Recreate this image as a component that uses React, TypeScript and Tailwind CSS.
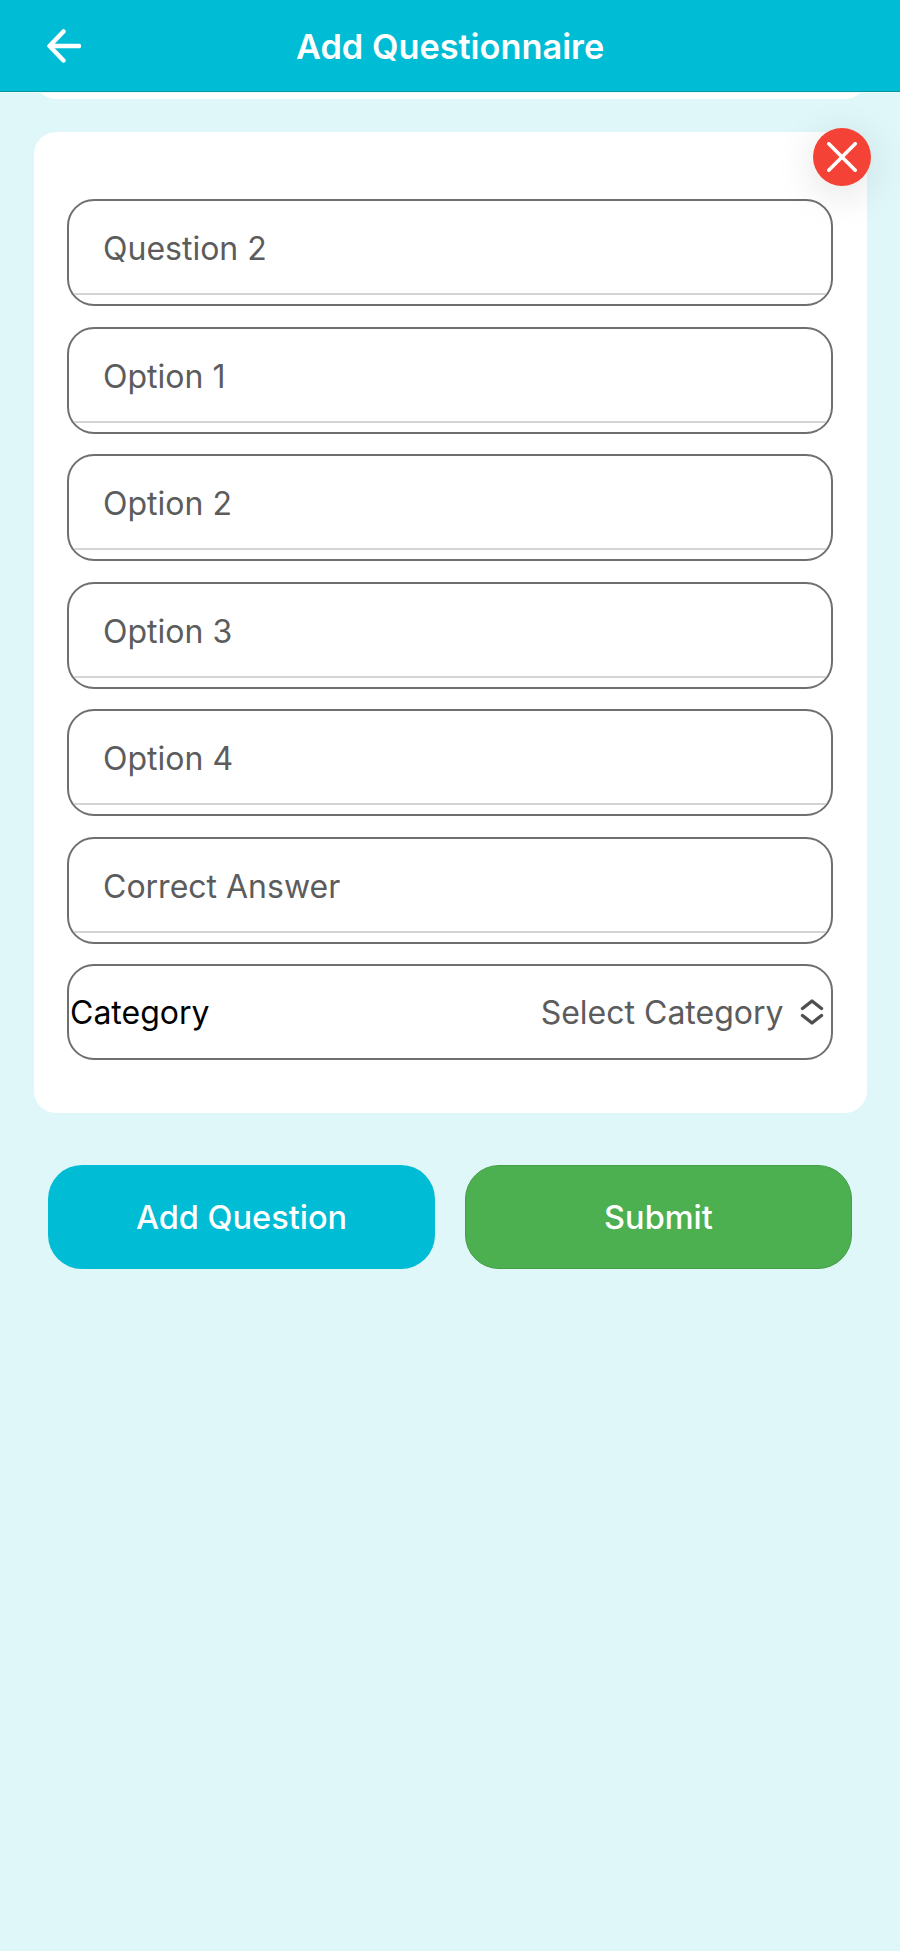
const fields = ["Question 2", "Option 1", "Option 2", "Option 3", "Option 4", "Correct Answer"];

function Field({ label }: { label: string }) {
  return (
    <div className="flex h-[107px] flex-col overflow-hidden rounded-[27px] border-2 border-[#6f6f6f] bg-white">
      <div className="flex h-[94px] shrink-0 items-center border-b-2 border-[#d4d4d4] pl-[34px] pt-[4px] text-[32px] text-[#5c5c5c]">
        {label}
      </div>
    </div>
  );
}

export default function App() {
  return (
    <div className="flex h-[1951px] w-[900px] flex-col bg-[#e0f7fa] font-['Inter',sans-serif]">
      <header className="flex h-[92px] shrink-0 items-center border-b border-[#0097a7] bg-[#00bcd4] pl-[47px]">
        <svg className="mt-[1px]" width="34" height="34" viewBox="0 0 34 34" fill="none" stroke="white" strokeWidth="4.5" strokeLinecap="round" strokeLinejoin="round">
          <path d="M32 17H3M16.500 2.500 2.500 17l14 14.500" />
        </svg>
        <h1 className="ml-[215px] pt-[3px] text-[34.300px] font-semibold text-white">Add Questionnaire</h1>
      </header>
      <div className="h-[7px] shrink-0 overflow-hidden border-t border-[#f0fbfc] pl-[33.500px] pr-[33px]">
        <div className="mt-[-24px] h-[30px] rounded-b-[22px] bg-white" />
      </div>
      <main className="flex flex-col pl-[33.500px] pr-[33px] pt-[33px]">
        <section className="relative flex flex-col gap-[20.500px] rounded-[22px] bg-white pb-[53px] pl-[33.500px] pr-[34.500px] pt-[67px]">
          <button className="absolute right-[-3.500px] top-[-4px] flex h-[58px] w-[58px] items-center justify-center rounded-full bg-[#f44336] shadow-[0_8px_40px_rgba(0,0,0,0.12)]">
            <svg width="30" height="30" viewBox="0 0 30 30" fill="none" stroke="white" strokeWidth="3.600" strokeLinecap="round">
              <path d="M1.800 1.800 28.200 28.200M28.200 1.800 1.800 28.200" />
            </svg>
          </button>
          {fields.map((f) => (
            <Field key={f} label={f} />
          ))}
          <div className="flex h-[96px] items-center rounded-[27px] border-2 border-[#6f6f6f] bg-white pl-[1px] pr-[7px]">
            <span className="pt-[1px] text-[32px] text-black">Category</span>
            <span className="ml-auto pt-[1px] text-[32px] text-[#5c5c5c]">Select Category</span>
            <svg className="ml-[16px]" width="24" height="26" viewBox="0 0 24 26" fill="none" stroke="#505050" strokeWidth="3.400" strokeLinecap="round" strokeLinejoin="round">
              <path d="M2.500 9.500 12 2l9.500 7.500M2.500 16.500 12 24l9.500-7.500" />
            </svg>
          </div>
        </section>
        <div className="mt-[52px] flex justify-between pl-[14.500px] pr-[15px]">
          <button className="h-[104px] w-[387px] rounded-[34px] bg-[#00bcd4] pt-[3px] text-[32.500px] font-medium text-white">Add Question</button>
          <button className="h-[104px] w-[387px] rounded-[34px] border border-[#43a047] bg-[#4caf50] pt-[3px] text-[32.500px] font-medium text-white">Submit</button>
        </div>
      </main>
    </div>
  );
}
